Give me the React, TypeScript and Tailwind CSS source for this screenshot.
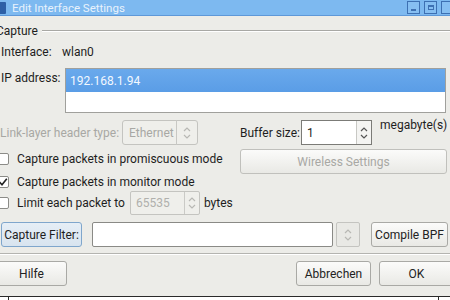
import React from "react";

const font = { fontFamily: 'Roboto, "Noto Sans", sans-serif' };

function UpDown({ disabled }: { disabled?: boolean }) {
  const c = disabled ? "#b8b8b4" : "#555";
  return (
    <svg width="10" height="18" viewBox="0 0 10 18">
      <path d="M2 7 L5 4 L8 7" fill="none" stroke={c} strokeWidth="1.2" />
      <path d="M2 11 L5 14 L8 11" fill="none" stroke={c} strokeWidth="1.2" />
    </svg>
  );
}

function Check({ checked }: { checked?: boolean }) {
  return (
    <div className="w-[12px] h-[12px] shrink-0 bg-white border border-[#8c8c88] rounded-[2px] flex items-center justify-center">
      {checked && (
        <svg width="10" height="10" viewBox="0 0 10 10">
          <path d="M1.5 5 L4 7.8 L8.8 1.8" fill="none" stroke="#222" strokeWidth="1.6" />
        </svg>
      )}
    </div>
  );
}

function Btn({ children, className = "" }: { children: React.ReactNode; className?: string }) {
  return (
    <div
      className={
        "h-[25px] shrink-0 flex items-center justify-center rounded-[3px] border border-[#a9a9a5] bg-gradient-to-b from-[#fbfbfa] to-[#e9e9e5] text-[12px] text-[#222] " +
        className
      }
    >
      {children}
    </div>
  );
}

export default function App() {
  return (
    <div className="w-[450px] h-[300px] overflow-hidden relative bg-white whitespace-nowrap" style={font}>
      {/* title bar */}
      <div className="h-[16px] bg-[#7db9f0] border-b border-[#5e98d8] flex items-center">
        <div className="w-[6px] h-[12px] bg-[#2d5fa6] rounded-r-[1px]" />
        <div className="ml-[6px] text-[11.5px] leading-[14px] text-[#e8f2fc]">Edit Interface Settings</div>
        <div className="flex-1" />
        <div className="flex gap-[4px] mr-[-4px]">
          <div className="w-[13px] h-[13px] border border-[#3d70b2] bg-[#86bff2] flex items-end justify-center pb-[2px]">
            <div className="w-[5px] h-[2px] bg-[#3d70b2]" />
          </div>
          <div className="w-[13px] h-[13px] border border-[#3d70b2] bg-[#86bff2] flex items-center justify-center">
            <div className="w-[6px] h-[5px] border border-[#3d70b2] border-t-2" />
          </div>
          <div className="w-[13px] h-[13px] border border-[#3d70b2] bg-[#86bff2]" />
        </div>
      </div>

      {/* body */}
      <div className="ml-[-4px] w-[470px] h-[280px] bg-[#ecece8] flex flex-col text-[12px] text-[#1e1e1e]">
        {/* group title */}
        <div className="mt-[8px] h-[14px] flex items-center">
          <span className="leading-[14px]">Capture</span>
          <div className="flex-1 ml-[4px] h-[2px] border-t border-[#a8a8a4] border-b border-b-white" />
        </div>

        {/* interface */}
        <div className="mt-[6px] h-[16px] flex items-center pl-[5px]">
          <div className="w-[61px] shrink-0">Interface:</div>
          <div>wlan0</div>
        </div>

        {/* IP */}
        <div className="mt-[8px] h-[45px] flex items-start pl-[5px]">
          <div className="w-[64px] shrink-0 mt-[2px] leading-[16px]">IP address:</div>
          <div className="flex-1 h-[45px] bg-white border border-[#a0a09c] flex flex-col">
            <div className="h-[23px] bg-gradient-to-b from-[#6aa9ec] to-[#5a9de6] text-[#f2f8ff] pl-[4px] flex items-center">
              192.168.1.94
            </div>
          </div>
          <div className="w-[20px] shrink-0" />
        </div>

        {/* link layer row */}
        <div className="mt-[7px] h-[25px] flex items-center pl-[4px]">
          <div className="w-[122px] shrink-0 text-[#a8a8a4]">Link-layer header type:</div>
          <div className="w-[76px] shrink-0 h-[25px] rounded-[3px] border border-[#c4c4c0] bg-[#efefeb] flex items-center">
            <div className="flex-1 pl-[6px] text-[#a8a8a4]">Ethernet</div>
            <div className="w-[21px] h-[25px] border-l border-[#c8c8c4] flex items-center justify-center">
              <UpDown disabled />
            </div>
          </div>
          <div className="w-[42px] shrink-0" />
          <div className="w-[61px] shrink-0">Buffer size:</div>
          <div className="w-[71px] shrink-0 h-[25px] bg-white border border-[#7b7b77] flex items-center">
            <div className="flex-1 pl-[5px]">1</div>
            <div className="w-[15px] h-[23px] border-l border-[#c8c8c4] bg-[#f4f4f2] flex items-center justify-center">
              <UpDown />
            </div>
          </div>
          <div className="ml-[8px] self-start mt-[-4px]">megabyte(s)</div>
        </div>

        {/* promiscuous row */}
        <div className="mt-[4px] h-[25px] flex items-start">
          <div className="w-[244px] shrink-0 h-[20px] flex items-center pl-[1px]">
            <Check />
            <span className="ml-[8px]">Capture packets in promiscuous mode</span>
          </div>
          <Btn className="w-[207px] text-[#a8a8a4] border-[#c0c0bc]">Wireless Settings</Btn>
        </div>

        {/* monitor row */}
        <div className="h-[17px] flex items-start pl-[1px]">
          <div className="h-[16px] flex items-center">
            <Check checked />
            <span className="ml-[8px]">Capture packets in monitor mode</span>
          </div>
        </div>

        {/* limit row */}
        <div className="h-[24px] flex items-center pl-[1px]">
          <Check />
          <span className="ml-[8px]">Limit each packet to</span>
          <div className="ml-[5px] w-[70px] shrink-0 h-[24px] rounded-[2px] border border-[#c4c4c0] bg-[#efefeb] flex items-center">
            <div className="flex-1 pl-[5px] text-[#b0b0ac]">65535</div>
            <div className="w-[15px] h-[22px] border-l border-[#cacac6] flex items-center justify-center">
              <UpDown disabled />
            </div>
          </div>
          <span className="ml-[4px]">bytes</span>
        </div>

        {/* capture filter row */}
        <div className="mt-[7px] h-[25px] flex items-center pl-[5px]">
          <div className="w-[81px] shrink-0 h-[25px] rounded-[3px] border border-[#7fa6cc] bg-gradient-to-b from-[#e6eef6] to-[#d8e4ef] flex items-center justify-center">
            Capture Filter:
          </div>
          <div className="ml-[10px] w-[241px] shrink-0 h-[25px] bg-white border border-[#8a8a86] rounded-[2px]" />
          <div className="ml-[3px] w-[24px] shrink-0 h-[25px] rounded-[2px] border border-[#c4c4c0] bg-[#e9e9e5] flex items-center justify-center">
            <UpDown disabled />
          </div>
          <Btn className="ml-[11px] w-[77px]">Compile BPF</Btn>
        </div>

        {/* separator */}
        <div className="mt-[6px] h-[2px] border-t border-[#b4b4b0] border-b border-b-white" />

        {/* buttons */}
        <div className="mt-[6px] h-[25px] flex items-center">
          <Btn className="w-[71px]">Hilfe</Btn>
          <div className="flex-1" />
          <Btn className="w-[75px]">Abbrechen</Btn>
          <Btn className="ml-[8px] w-[75px] mr-[12px]">OK</Btn>
        </div>
      </div>
      <div className="h-[1px] bg-[#2a2a2a]" />
      <div className="h-[3px] flex">
        <div className="ml-[8px] w-[1px] bg-[#2a2a2a]" />
        <div className="flex-1" />
        <div className="mr-[11px] w-[1px] bg-[#2a2a2a]" />
      </div>
    </div>
  );
}
